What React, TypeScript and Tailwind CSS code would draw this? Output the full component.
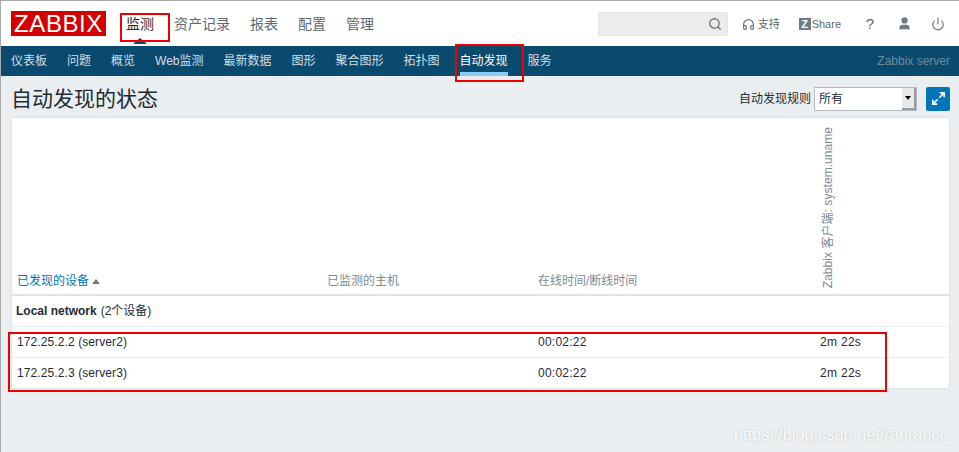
import { Search, Headphones, User, Power, Maximize2 } from 'lucide-react';

const font = { fontFamily: '"Liberation Sans", "Noto Sans CJK SC", sans-serif' };

const mainMenu = ['监测', '资产记录', '报表', '配置', '管理'];
const subMenu = ['仪表板', '问题', '概览', 'Web监测', '最新数据', '图形', '聚合图形', '拓扑图', '自动发现', '服务'];

const rows = [
  { device: '172.25.2.2 (server2)', time: '00:02:22', value: '2m 22s' },
  { device: '172.25.2.3 (server3)', time: '00:02:22', value: '2m 22s' },
];

export default function App() {
  return (
    <div
      className="relative h-[452px] w-[959px] overflow-hidden border-t border-l border-[#a9a9a9] bg-[#ebeef0] text-[#1f2c33]"
      style={font}
    >
      {/* top bar */}
      <header className="flex h-[45px] items-center bg-white">
        <div className="ml-[10px] flex h-[25px] w-[95px] items-center justify-center bg-[#d40000] text-[24px] leading-none tracking-[0.6px] text-white">
          ZABBIX
        </div>
        <nav className="ml-[20px] flex gap-[20px] pt-[1px] text-[14px] text-[#5b6a72]">
          {mainMenu.map((item, i) => (
            <span key={item} className={i === 0 ? 'relative text-[#1f2c33]' : ''}>
              {item}
              {i === 0 && (
                <span className="absolute top-[24px] left-[7px] h-0 w-0 border-x-[7px] border-b-[6px] border-x-transparent border-b-[#0b4a6f]" />
              )}
            </span>
          ))}
        </nav>
        <div className="ml-auto flex items-center text-[#5b6a72]">
          <div className="flex h-[24px] w-[130px] items-center justify-end border border-[#e5e5e5] bg-[#ececec] pr-[5px]">
            <Search size={14} strokeWidth={2.4} className="text-[#6d7b83]" />
          </div>
          <div className="ml-[14px] flex items-center gap-[3px] pt-[1px] text-[11px]">
            <Headphones size={13} strokeWidth={2.4} className="text-[#6d7b83]" />
            <span>支持</span>
          </div>
          <div className="ml-[19px] flex items-center gap-[1px] pt-[1px] text-[11px]">
            <span className="flex h-[12px] w-[12px] items-center justify-center bg-[#6d7b83] text-[11px] leading-none font-bold text-white">
              Z
            </span>
            <span>Share</span>
          </div>
          <span className="ml-[24px] w-[10px] text-center text-[15px] leading-none">?</span>
          <User size={15} fill="currentColor" className="ml-[22px] text-[#6d7b83]" />
          <Power size={14} strokeWidth={2} className="mr-[14px] ml-[19px] text-[#6d7b83]" />
        </div>
      </header>

      {/* sub menu */}
      <nav className="flex h-[30px] items-stretch bg-[#0b4a6f] pr-[9px] pl-[10px] text-[12px] text-[#d3dde3]">
        <div className="flex gap-[20px]">
          {subMenu.map((item) => (
            <span
              key={item}
              className={
                item === '自动发现'
                  ? 'flex items-center border-b-[4px] border-[#8dcbf2] pt-[4px] text-white'
                  : 'flex items-center'
              }
            >
              {item}
            </span>
          ))}
        </div>
        <span className="ml-auto flex items-center text-[#6d8a9c]">Zabbix server</span>
      </nav>

      {/* page title */}
      <div className="flex h-[41px] items-center pt-[4px] pr-[9px] pl-[10px]">
        <h1 className="text-[21px] leading-none text-[#1f2c33]">自动发现的状态</h1>
        <label className="ml-auto flex items-center gap-[3px] text-[12px]">
          <span>自动发现规则</span>
          <span className="relative flex h-[24px] w-[103px] items-center border border-[#b4bcc1] bg-white pl-[4px] text-[12px]">
            所有
            <span className="absolute top-0 right-0 flex h-[22px] w-[14px] items-center justify-center border-r-2 border-b-2 border-[#9a9a9a] bg-[#e9e9e9]">
              <span className="h-0 w-0 border-x-[3px] border-t-[4px] border-x-transparent border-t-black" />
            </span>
          </span>
        </label>
        <button className="ml-[9px] flex h-[24px] w-[24px] items-center justify-center rounded-[2px] bg-[#0275b8]">
          <Maximize2 size={15} strokeWidth={2.6} className="text-white" />
        </button>
      </div>

      {/* table */}
      <div className="ml-[10px] w-[939px] border border-[#dfe4e7] bg-white text-[12px]">
        <div className="grid h-[178px] grid-cols-[310px_211px_282px_1fr] items-end border-b-2 border-[#dfe4e7] pb-[4px] pl-[5px] text-[#7a8a93]">
          <span className="flex items-center gap-[3px] text-[#0275b8]">
            已发现的设备
            <span className="h-0 w-0 border-x-[4px] border-b-[5px] border-x-transparent border-b-[#6d7b83]" />
          </span>
          <span>已监测的主机</span>
          <span>在线时间/断线时间</span>
          <span className="mb-[2px] ml-[1px] rotate-180 whitespace-nowrap tracking-[0.05px] leading-[14px] [text-orientation:sideways] [writing-mode:vertical-rl]">
            Zabbix 客户端: system.uname
          </span>
        </div>
        <div className="flex h-[31px] items-center border-b border-[#ebeef0] pl-[4px]">
          <b>Local network</b>
          <span className="ml-[4px]">(2个设备)</span>
        </div>
        {rows.map((row, i) => (
          <div
            key={row.device}
            className={`grid grid-cols-[521px_282px_1fr] items-center pl-[5px] tracking-[0.1px] ${i === 0 ? 'h-[31px] border-b border-[#ebeef0] pb-[1px]' : 'h-[30px] pb-[1px]'}`}
          >
            <span>{row.device}</span>
            <span className="tracking-[0.25px]">{row.time}</span>
            <span className="tracking-[0.3px]">{row.value}</span>
          </div>
        ))}
      </div>

      {/* annotation boxes */}
      <div className="absolute top-[12px] left-[119px] h-[29px] w-[50px] border-2 border-[#f00000]" />
      <div className="absolute top-[43px] left-[454px] h-[38px] w-[69px] border-2 border-[#f00000]" />
      <div className="absolute top-[331px] left-[7px] h-[60px] w-[879px] border-2 border-[#f00000]" />

      {/* watermark */}
      <span className="absolute top-[423px] left-[733px] text-[16.3px] leading-[20px] whitespace-nowrap text-white/90 [text-shadow:0_0_2px_#b8bdc1]">
        https://blog.csdn.net/ranrancc_
      </span>
    </div>
  );
}
